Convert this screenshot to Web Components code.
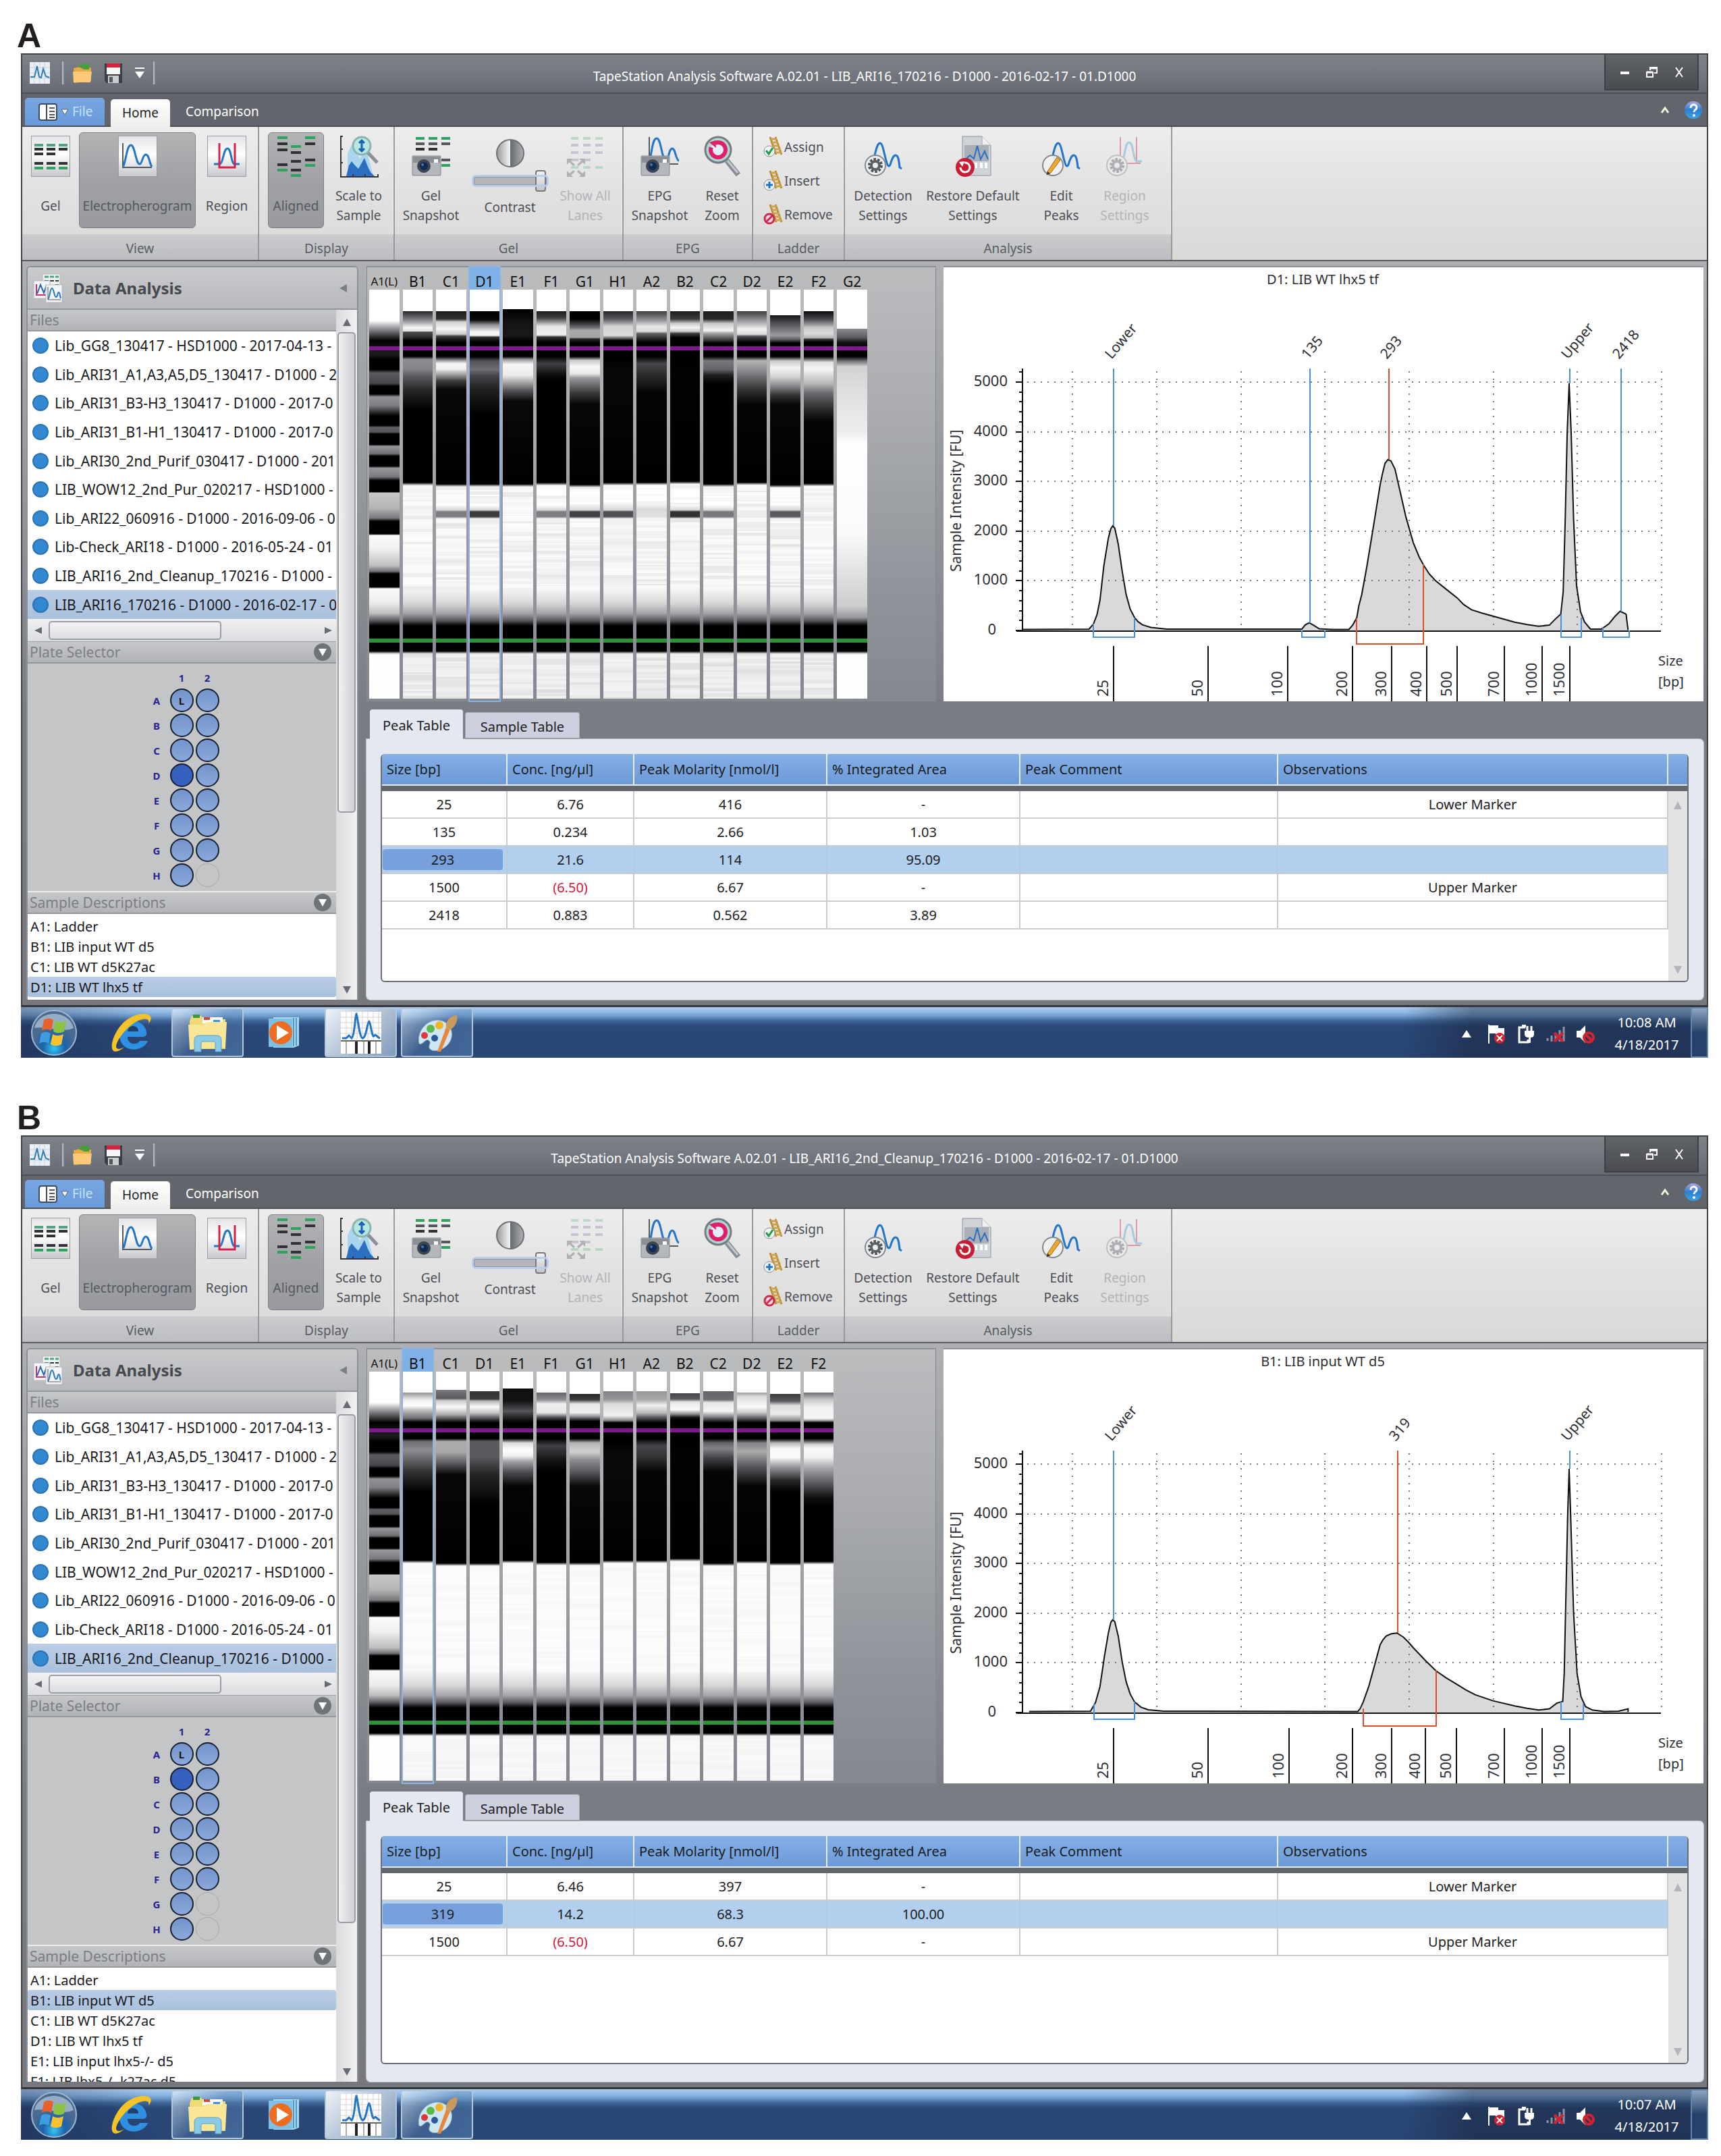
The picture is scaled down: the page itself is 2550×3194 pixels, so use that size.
<!DOCTYPE html>
<html lang="en">
<head>
<meta charset="utf-8">
<title>TapeStation Analysis Software</title>
<style>
  body { margin: 0; background: #fff; font-family: "Noto Sans", "Open Sans", sans-serif; }
  main { display: flex; flex-direction: column; gap: 36px; padding: 0 19px 24px 31px; }
</style>
</head>
<body>
<main>
  <figure-panel letter="A"><tape-window run="a"></tape-window></figure-panel>
  <figure-panel letter="B"><tape-window run="b"></tape-window></figure-panel>
</main>
<script>
/* ---------- data ---------- */
const FILES = [
  'Lib_GG8_130417 - HSD1000 - 2017-04-13 -',
  'Lib_ARI31_A1,A3,A5,D5_130417 - D1000 - 2',
  'Lib_ARI31_B3-H3_130417 - D1000 - 2017-0',
  'Lib_ARI31_B1-H1_130417 - D1000 - 2017-0',
  'Lib_ARI30_2nd_Purif_030417 - D1000 - 2017',
  'LIB_WOW12_2nd_Pur_020217 - HSD1000 -',
  'Lib_ARI22_060916 - D1000 - 2016-09-06 - 0',
  'Lib-Check_ARI18 - D1000 - 2016-05-24 - 01',
  'LIB_ARI16_2nd_Cleanup_170216 - D1000 - 2',
  'LIB_ARI16_170216 - D1000 - 2016-02-17 - 0'
];
const LADDER = [[210,255],[240,140],[280,0],[318,28],[330,25],[345,0],[380,0],[392,90],[428,70],[438,0],[465,0],[475,145],[505,125],[535,20],[542,0],[575,0],[580,95],[597,85],[603,0],[640,0],[646,150],[672,110],[680,0],[715,0],[722,150],[752,120],[765,0],[804,0],[808,200],[860,180],[895,120],[906,0],[950,0],[955,250],[1000,242],[1060,190],[1080,110],[1088,0],[1134,0],[1140,250],[1190,235],[1225,190],[1250,90],[1268,0]];
const lane = (name, top, low, end, band) => ({ name, top, low, end, band });
const RUNS = {
  a: {
    title: 'TapeStation Analysis Software A.02.01 - LIB_ARI16_170216 - D1000 - 2016-02-17 - 01.D1000',
    files: FILES, filesHeight: 426, thumb: 712, time: '10:08 AM', selectedWell: 'D1', emptyWells: ['H2'],
    samples: ['A1: Ladder', 'B1: LIB input WT d5', 'C1: LIB WT d5K27ac', 'D1: LIB WT lhx5 tf'], selectedSample: 3,
    gelWidth: 738, selectedLane: 3, noise: 20,
    lanes: [
      lane('A1(L)'),
      lane('B1', [[178,40],[205,120],[235,245],[247,225],[250,75],[268,45],[280,0]], [[345,140],[380,130],[400,95],[450,40],[520,0]], 772),
      lane('C1', [[178,30],[205,50],[215,210],[240,245],[258,200],[265,60],[285,0]], [[348,150],[360,245],[378,240],[395,170],[420,60],[450,8]], 777, 125),
      lane('D1', [[178,0],[208,8],[225,140],[250,245],[262,240],[268,50],[285,0]], [[350,80],[380,110],[400,70],[450,32],[540,0]], 777, 60),
      lane('E1', [[172,0],[220,20],[262,25],[280,0]], [[345,150],[362,245],[400,235],[420,180],[455,80],[490,10]], 777),
      lane('F1', [[178,30],[200,60],[230,230],[260,240],[268,50],[285,0]], [[360,65],[400,12],[420,0]], 772, 125),
      lane('G1', [[178,0],[205,0],[235,110],[245,170],[268,165],[275,40],[288,0]], [[348,200],[370,248],[395,230],[410,150],[460,60],[500,8]], 779, 65),
      lane('H1', [[178,40],[205,90],[230,210],[262,220],[270,120],[280,0]], [[400,8]], 772, 80),
      lane('A2', [[178,60],[210,150],[230,230],[248,220],[255,100],[285,0]], [[360,70],[390,50],[460,5]], 771, 222),
      lane('B2', [[178,30],[205,60],[220,200],[235,245],[248,200],[255,60],[270,0]], [[400,2]], 768, 50),
      lane('C2', [[178,30],[205,40],[220,200],[245,245],[255,160],[280,50],[288,0]], [[350,120],[380,100],[400,30],[430,0]], 777, 120),
      lane('D2', [[178,60],[210,150],[240,240],[258,220],[265,80],[285,0]], [[350,180],[390,130],[450,50],[500,5]], 771),
      lane('E2', [[192,20],[215,70],[262,155],[275,100],[288,0]], [[350,200],[375,245],[405,210],[440,130],[470,50],[500,8]], 780, 90),
      lane('F2', [[178,10],[205,70],[235,200],[255,220],[270,180],[275,60],[285,0]], [[355,225],[380,245],[430,180],[460,110],[520,40],[560,5]], 775),
      lane('G2', [[238,140],[270,90],[285,20],[295,10]], null)
    ],
    sampleTitle: 'D1: LIB WT lhx5 tf',
    ticks: [[25,354],[50,545],[100,707],[200,837],[300,917],[400,987],[500,1049],[700,1144],[1000,1221],[1500,1276]],
    trace: [[170,1281],[305,1280],[314,1262],[321,1230],[327,1180],[335,1060],[344,965],[349,932],[353,922],[357,930],[364,985],[372,1080],[380,1160],[388,1210],[397,1240],[404,1254],[413,1265],[430,1274],[462,1280],[735,1280],[742,1265],[750,1258],[760,1268],[770,1279],[795,1281],[830,1281],[838,1265],[846,1240],[850,1200],[856,1160],[866,1065],[880,920],[893,780],[898,740],[903,705],[909,692],[915,697],[923,725],[935,815],[945,890],[960,980],[972,1030],[981,1058],[992,1088],[1005,1112],[1027,1142],[1049,1172],[1062,1195],[1078,1213],[1100,1225],[1121,1235],[1165,1256],[1190,1264],[1213,1270],[1235,1266],[1247,1245],[1258,1228],[1263,1150],[1267,900],[1271,600],[1275,428],[1279,600],[1284,900],[1290,1130],[1298,1220],[1306,1255],[1318,1280],[1340,1280],[1355,1262],[1368,1235],[1378,1218],[1390,1228],[1394,1283]],
    marks: [['Lower',354,922,314,1262,397,1240,'b'],['135',751,1258,735,1284,782,1284,'b'],['293',911,692,846,1242,981,1055,'r'],['Upper',1276,428,1258,1228,1300,1240,'b'],['2418',1380,1218,1343,1275,1396,1284,'b']],
    rows: [['25','6.76','416','-','','Lower Marker'],['135','0.234','2.66','1.03','',''],['293','21.6','114','95.09','',''],['1500','(6.50)','6.67','-','','Upper Marker'],['2418','0.883','0.562','3.89','','']],
    selectedRow: 2
  },
  b: {
    title: 'TapeStation Analysis Software A.02.01 - LIB_ARI16_2nd_Cleanup_170216 - D1000 - 2016-02-17 - 01.D1000',
    files: FILES.slice(0, 9), filesHeight: 384, thumb: 754, time: '10:07 AM', selectedWell: 'B1', emptyWells: ['G2', 'H2'],
    samples: ['A1: Ladder', 'B1: LIB input WT d5', 'C1: LIB WT d5K27ac', 'D1: LIB WT lhx5 tf', 'E1: LIB input lhx5-/- d5', 'F1: LIB lhx5-/- k27ac d5'], selectedSample: 1,
    gelWidth: 688, selectedLane: 1, noise: 6,
    lanes: [
      lane('A1(L)'),
      lane('B1', [[176,150],[200,235],[220,255],[240,180],[265,110],[278,0]], [[345,110],[375,140],[400,110],[450,50],[520,0]], 757),
      lane('C1', [[166,120],[196,90],[203,200],[225,250],[250,180],[270,60],[280,0]], [[345,170],[380,170],[420,90],[460,8]], 767),
      lane('D1', [[170,50],[198,60],[205,180],[225,250],[245,200],[265,80],[280,0]], [[345,90],[400,88],[460,36],[520,18],[560,0]], 767),
      lane('E1', [[162,15],[205,20],[240,85],[260,40],[280,0]], [[350,220],[375,255],[395,240],[415,160],[450,80],[500,5]], 757),
      lane('F1', [[176,100],[200,140],[215,240],[245,230],[262,80],[275,0]], [[360,65],[410,20],[450,0]], 764),
      lane('G1', [[180,40],[200,60],[215,230],[245,240],[258,150],[275,0]], [[350,180],[380,210],[410,140],[450,90],[500,8]], 765),
      lane('H1', [[172,130],[200,150],[215,220],[255,240],[272,140],[280,0]], [[400,10]], 757),
      lane('A2', [[172,150],[200,170],[220,240],[245,190],[262,90],[280,0]], [[360,70],[400,50],[450,5]], 757),
      lane('B2', [[178,70],[198,90],[208,230],[235,250],[250,140],[262,20],[270,0]], [[400,2]], 751),
      lane('C2', [[172,100],[200,110],[210,230],[240,245],[260,130],[280,0]], [[350,100],[370,130],[400,70],[450,5]], 767),
      lane('D2', [[176,160],[190,220],[225,250],[245,200],[265,90],[280,0]], [[350,130],[380,170],[430,90],[500,5]], 759),
      lane('E2', [[180,60],[205,90],[220,220],[250,235],[272,140],[280,0]], [[350,180],[370,250],[400,250],[430,160],[480,40],[520,0]], 766),
      lane('F2', [[176,110],[200,200],[225,240],[265,245],[272,170],[280,0]], [[355,210],[370,250],[400,240],[440,160],[490,90],[540,15],[570,0]], 761)
    ],
    sampleTitle: 'B1: LIB input WT d5',
    ticks: [[25,354],[50,545],[100,709],[200,837],[300,917],[400,984],[500,1047],[700,1144],[1000,1221],[1500,1276]],
    trace: [[184,1281],[308,1280],[318,1250],[327,1195],[336,1090],[344,1010],[349,972],[353,963],[357,970],[364,1020],[372,1110],[380,1178],[388,1220],[397,1248],[410,1266],[425,1275],[456,1280],[820,1281],[848,1281],[853,1270],[859,1248],[870,1195],[882,1120],[893,1050],[899,1032],[905,1020],[915,1012],[927,1009],[940,1023],[950,1040],[960,1060],[985,1105],[1006,1140],[1027,1165],[1049,1188],[1066,1206],[1085,1223],[1121,1244],[1165,1262],[1190,1270],[1213,1276],[1235,1272],[1250,1252],[1262,1246],[1265,1150],[1269,840],[1272,600],[1275,440],[1278,600],[1284,940],[1291,1150],[1299,1230],[1308,1264],[1322,1276],[1345,1281],[1375,1280],[1394,1272],[1394,1283]],
    marks: [['Lower',354,963,315,1255,397,1248,'b'],['319',929,1009,859,1270,1006,1138,'r'],['Upper',1276,440,1258,1247,1304,1255,'b']],
    rows: [['25','6.46','397','-','','Lower Marker'],['319','14.2','68.3','100.00','',''],['1500','(6.50)','6.67','-','','Upper Marker']],
    selectedRow: 1
  }
};

/* ---------- icons ---------- */
const svg = (w, h, body) => `<svg width="${w}" height="${h}" viewBox="0 0 ${w} ${h}" aria-hidden="true">${body}</svg>`;
const dash = (x, y, c, w = 13) => `<rect x="${x}" y="${y}" width="${w}" height="4" fill="${c}"/>`;
const tile = id => `<defs><linearGradient id="${id}" x2="0" y2="1"><stop stop-color="#e2e3e6"/><stop offset=".45" stop-color="#fff"/><stop offset="1" stop-color="#c6c8cc"/></linearGradient></defs><rect x=".5" y=".5" width="57" height="60" fill="url(#${id})" stroke="#9a9da2"/>`;
const camera = (y) => `<rect x="1" y="${y}" width="42" height="29" rx="1" fill="#b4b8bd" stroke="#85898f"/><rect x="2" y="${y + 1}" width="40" height="9" fill="#8b9097"/><rect x="33" y="${y + 5}" width="6" height="5" fill="#fff"/><circle cx="18" cy="${y + 15}" r="10" fill="#3f454e"/><circle cx="18" cy="${y + 15}" r="6" fill="#0c2c58"/><circle cx="16" cy="${y + 13}" r="2" fill="#4d74a5"/>`;
const gear = (cx, cy) => `<circle cx="${cx}" cy="${cy}" r="15" fill="#eceef0" stroke="#84888e" stroke-width="2"/><circle cx="${cx}" cy="${cy}" r="9" fill="none" stroke="#4c5157" stroke-width="4" stroke-dasharray="3.5 2.15"/><circle cx="${cx}" cy="${cy}" r="6" fill="none" stroke="#5c6167" stroke-width="4"/>`;
const wave = '<path d="M17 22C19 14 21 4 25 4C29 4 31 20 34 30C36 38 38 40 40 36C42 30 44 22 48 22C52 22 53 30 54 40L57 42" transform="translate(-1 7)" fill="none" stroke="#2276c9" stroke-width="3"/>';
const G = '#2ea35b', K = '#303236';
const ladder = '<path d="M11 1l9 26M19 1l9 26" stroke="#b98a30" stroke-width="3" fill="none"/><path d="M12 4h9M14 9h9M15 14h10M17 19h10M19 24h9" stroke="#cfa34a" stroke-width="3"/>';
const ICON = {
  gel: svg(58, 62, tile('t1') + [5, 23, 41].map(x => dash(x, 12, '#4fa583') + dash(x, 18, K) + dash(x, 39, K) + dash(x, 46, G)).join('') + dash(5, 25, K) + dash(23, 25, K)),
  epg: svg(58, 62, tile('t2') + '<path d="M7 11v36h43" fill="none" stroke="#555a61" stroke-width="2"/><path d="M8 45C12 35 13 14 19 14C25 14 26 42 32 42C36 42 36 28 41 28C46 28 46 40 50 46" fill="none" stroke="#2276c9" stroke-width="3"/>'),
  region: svg(58, 62, tile('t3') + '<path d="M10 42h9C24 40 24 19 30 19C36 19 35 40 40 42h8" fill="none" stroke="#2276c9" stroke-width="3"/><path d="M18 11v36h23V11" fill="none" stroke="#d42345" stroke-width="3"/>'),
  aligned: svg(58, 62, dash(1, 1, G, 15) + dash(42, 1, G, 15) + dash(1, 10, K, 15) + dash(42, 10, K, 15) + dash(21, 14, G, 15) + dash(1, 19, K, 15) + dash(21, 23, K, 15) + dash(42, 34, K, 15) + dash(21, 36, K, 15) + dash(1, 41, K, 15) + dash(42, 42, G, 15) + dash(1, 49, G, 15) + dash(21, 49, K, 15) + dash(21, 57, G, 15)),
  scale: svg(58, 62, '<path d="M12 60V26L20 10L30 34L40 20L50 60Z" fill="#a9d6ee"/><path d="M10 60L14 44L18 38L23 44L28 49L32 42L37 33L42 46L46 54L52 60Z" fill="#2a6fc0"/><path d="M5 1H2V61H57V57M2 20h3M2 40h3M20 61v-4M38 61v-4" fill="none" stroke="#333840" stroke-width="2"/><path d="M42 25L56 40" stroke="#8a9198" stroke-width="5"/><circle cx="33" cy="15" r="13" fill="#b7e8de" stroke="#8db3ae" stroke-width="3"/><path d="M33 7v16M29 11l4-4 4 4M29 19l4 4 4-4" fill="none" stroke="#1c5fb8" stroke-width="3"/>'),
  gelsnap: svg(58, 62, [6, 25, 44].map(x => dash(x, 2, G) + dash(x, 10, '#55595f')).join('') + dash(6, 18, K) + dash(25, 18, K) + dash(44, 34, '#55595f') + dash(44, 42, G) + camera(30)),
  lanes: svg(58, 62, '<g opacity=".4">' + [8, 26, 44].map(x => dash(x, 2, '#6dc68f', 11) + dash(x, 12, '#8e93b4', 11) + dash(x, 23, '#8e93b4', 11)).join('') + dash(8, 34, '#8e93b4', 11) + dash(26, 34, '#8e93b4', 11) + dash(8, 45, '#6dc68f', 11) + dash(26, 45, '#6dc68f', 11) + dash(44, 45, '#6dc68f', 11) + '<path d="M5 37l8 7M26 37l-8 7M5 59l8-7M26 59l-8-7" stroke="#62656b" stroke-width="3"/><path d="M2 34h9l-9 9zM29 34h-9l9 9zM2 61h9l-9-9zM29 61h-9l9-9z" fill="#62656b"/></g>'),
  epgsnap: svg(58, 62, '<path d="M13 2v40h43" fill="none" stroke="#555a61" stroke-width="2"/><path d="M14 36C17 22 18 4 24 4C31 4 31 36 38 36C42 36 42 19 47 19C52 19 52 36 57 37" fill="none" stroke="#2276c9" stroke-width="3"/>' + camera(30)),
  zoom: svg(58, 62, '<path d="M36 37L53 58" stroke="#878d94" stroke-width="8"/><path d="M37 37L52 55" stroke="#c6cace" stroke-width="3"/><circle cx="23" cy="21" r="19" fill="#a9d9cf" stroke="#747b82" stroke-width="3"/><circle cx="23" cy="21" r="11" fill="#e5eef8" stroke="#e31c6c" stroke-width="6" stroke-dasharray="60 9" transform="rotate(-115 23 21)"/><path d="M10 10l9-3 1 11z" fill="#e31c6c"/>'),
  detect: svg(58, 62, wave + gear(17, 44)),
  restore: svg(58, 62, '<path d="M13 1H42L55 14V59H13Z" fill="#cfd3d7" stroke="#8f949a"/><path d="M42 1V14H55" fill="#eef0f1" stroke="#a3a8ad"/><rect x="16" y="14" width="36" height="24" fill="#aab0b7"/><path d="M18 35l6-6 6 5 5-19 5 20 6-12 5 12" fill="none" stroke="#2a6fc0" stroke-width="2"/><path d="M33 40v8M41 40v8M48 40v8" stroke="#fff" stroke-width="4"/><circle cx="17" cy="47" r="14" fill="#c71e35"/><circle cx="17" cy="47" r="7" fill="none" stroke="#fff" stroke-width="3" stroke-dasharray="34 10" transform="rotate(-100 17 47)"/><path d="M8 39l8-1-3 8z" fill="#fff"/>'),
  edit: svg(58, 62, wave + '<circle cx="16" cy="44" r="15" fill="#eef0f1" stroke="#84888e" stroke-width="2"/><path d="M8 53L22 32L27 36L13 55L7 58Z" fill="#eda82d" stroke="#9a6c18"/><path d="M7 58l1-5 4 3z" fill="#333"/>'),
  regset: svg(58, 62, '<g opacity=".4"><path d="M22 2v39h30M46 2v39" fill="none" stroke="#d42345" stroke-width="2"/><path d="M20 40h4C29 36 28 10 35 10C42 10 40 34 46 38h8" fill="none" stroke="#4b9fd0" stroke-width="3"/>' + gear(17, 44) + '</g>'),
  contrast: svg(44, 46, '<defs><linearGradient id="c1"><stop stop-color="#999"/><stop offset=".5" stop-color="#f5f5f5"/><stop offset=".51" stop-color="#66696e"/><stop offset="1" stop-color="#b0b2b5"/></linearGradient></defs><circle cx="22" cy="23" r="20" fill="url(#c1)" stroke="#6c7076" stroke-width="2"/>'),
  assign: svg(30, 32, ladder + '<circle cx="10" cy="22" r="8" fill="#f2f4f5" stroke="#8a8e93"/><path d="M5 21l4 5 6-9" fill="none" stroke="#1f9d47" stroke-width="3"/>'),
  insert: svg(30, 32, ladder + '<circle cx="10" cy="22" r="8" fill="#eef3f8" stroke="#8a8e93"/><path d="M10 17v10M5 22h10" stroke="#1f72c4" stroke-width="3"/>'),
  remove: svg(30, 32, ladder + '<circle cx="10" cy="22" r="7" fill="#f7d7de" stroke="#cc2a4e" stroke-width="3"/><path d="M5 27l10-10" stroke="#cc2a4e" stroke-width="3"/>')
};

/* ---------- base class ---------- */
class Part extends HTMLElement {
  connectedCallback() {
    if (this.shadowRoot) return;
    this.attachShadow({ mode: 'open' }).innerHTML =
      `<style>*{box-sizing:border-box}:host{display:block;box-sizing:border-box}button{font:inherit;color:inherit;background:none;border:0;padding:0;margin:0}svg{display:block}${this.css()}</style>${this.html()}`;
  }
  get run() { return RUNS[this.getAttribute('run')]; }
}

customElements.define('figure-panel', class extends Part {
  css() { return `h2{margin:0 0 1px -6px;padding-top:28px;font:bold 50px/50px "Liberation Sans",sans-serif;color:#231f20}`; }
  html() { return `<h2>${this.getAttribute('letter')}</h2><slot></slot>`; }
});

customElements.define('tape-window', class extends Part {
  css() { return `
    .app{border:2px solid #414347;border-bottom:3px solid #33363c;}
    .body{display:grid;grid-template-columns:492px minmax(0,1fr);gap:12px;padding:7px 5px 8px 6px;background:linear-gradient(#aeb0b3,#989b9f 25%,#82858b 52%,#797c82 60%,#76787d)}
    .right{display:flex;flex-direction:column;gap:12px;min-width:0}
    .views{display:grid;grid-template-columns:844px minmax(0,1fr);gap:11px}
    side-bar{height:0;min-height:100%}`; }
  html() { const r = this.getAttribute('run'); return `
    <div class="app"><title-bar run="${r}"></title-bar><ribbon-bar></ribbon-bar>
      <div class="body"><side-bar run="${r}"></side-bar>
        <div class="right"><div class="views"><gel-view run="${r}"></gel-view><epg-chart run="${r}"></epg-chart></div><peak-table run="${r}"></peak-table></div>
      </div></div>
    <task-bar run="${r}"></task-bar>`; }
});

customElements.define('title-bar', class extends Part {
  css() { return `
    :host{display:grid;grid-template-columns:1fr auto 1fr;height:58px;background:linear-gradient(#7f8287,#747880 45%,#676a71);border-bottom:2px solid #4d5056;color:#fff}
    .quick{display:flex;align-items:center;padding-left:11px;gap:18px;padding-bottom:2px}
    .sep{width:3px;height:34px;background:linear-gradient(90deg,#c8cacd,#84878c)}
    .tight{gap:12px;display:flex;align-items:center}
    h1{margin:0;font-size:19px;line-height:64px;font-weight:400;white-space:nowrap;height:56px}
    .ctl{justify-self:end;display:flex;align-items:center;gap:16px;padding:0 15px 0 17px;width:140px;height:53px;margin-right:12px;background:linear-gradient(#606368,#4a4c51);border:2px solid #3e4044;border-top:0}
    .ctl button{width:24px;height:24px;flex:none}`; }
  html() { return `
    <div class="quick">
      ${svg(30, 32, '<rect width="30" height="32" fill="#e9f0f5"/><path d="M0 8h30M0 16h30M0 24h30M7 0v32M15 0v32M22 0v32" stroke="#cbd3da"/><path d="M1 22h6l4-16 3 16 3 1 3-13 4 11 5 2" fill="none" stroke="#2d7fb8" stroke-width="2"/>')}
      <div class="tight"><span class="sep"></span>
      <button aria-label="Open">${svg(30, 32, '<path d="M2 9l10-2 3 3 13-2v20L3 31Z" fill="#e9a947"/><path d="M1 14h28l-2 16H2z" fill="#fbc977"/><path d="M10 7c2-5 8-6 11-3l4-2v9h-9l3-3c-3-2-5-1-6 1z" fill="#3fa52f"/>')}</button></div>
      <button aria-label="Save">${svg(26, 32, '<path d="M0 2h26v29H3l-3-4z" fill="#3c3e43"/><rect x="3" y="2" width="20" height="16" fill="#f5f5f5"/><rect x="3" y="2" width="20" height="6" fill="#d8223c"/><rect x="5" y="20" width="16" height="11" fill="#c9ccd0"/><rect x="7" y="22" width="5" height="8" fill="#55585e"/>')}</button>
      <div class="tight"><button aria-label="Customize">${svg(16, 18, '<path d="M1 2h14" stroke="#fff" stroke-width="2"/><path d="M1 7h14l-7 10z" fill="#fff"/>')}</button>
      <span class="sep"></span></div>
    </div>
    <h1>${this.run.title}</h1>
    <div class="ctl">
      <button aria-label="Minimize">${svg(24, 24, '<rect x="5" y="11" width="13" height="4" fill="#fff"/>')}</button>
      <button aria-label="Restore">${svg(24, 24, '<path d="M9 9V5h10v8h-4" fill="none" stroke="#fff" stroke-width="2"/><path d="M9 6h10" stroke="#fff" stroke-width="3"/><path d="M4 12h9v7H4z" fill="none" stroke="#fff" stroke-width="2"/><path d="M4 12h9" stroke="#fff" stroke-width="3"/>')}</button>
      <button aria-label="Close">${svg(24, 24, '<path d="M7 5l10 14M17 5L7 19" stroke="#fff" stroke-width="2"/>')}</button>
    </div>`; }
});

customElements.define('ribbon-button', class extends Part {
  css() { return `
    button{width:100%;height:142px;display:flex;flex-direction:column;align-items:center;gap:13px;padding-top:4px;border-radius:6px;border:1px solid transparent;color:#4c4f56;font-size:19px;line-height:29px}
    :host([on]) button{background:linear-gradient(#b2b4b5,#9fa1a5 50%,#989a9f);border-color:#7c7f85;color:#55585f}
    :host([dim]) button{color:#b2b4b8}
    span{height:58px;display:flex;align-items:center;text-align:center;white-space:pre}`; }
  html() { return `<button${this.hasAttribute('dim') ? ' disabled' : ''}>${ICON[this.getAttribute('icon')]}<span><slot></slot></span></button>`; }
});

customElements.define('ribbon-group', class extends Part {
  css() { return `
    :host{display:flex;flex-direction:column;border-right:2px solid #96999f;box-shadow:inset -1px 0 #f2f2f2}
    .items{display:flex;height:159px;padding-top:8px}
    h3{margin:0;height:38px;line-height:42px;text-align:center;font-weight:400;font-size:19px;color:#595c63;background:linear-gradient(#cbccce,#bcbdc0)}`; }
  html() { return `<div class="items"><slot></slot></div><h3>${this.getAttribute('label')}</h3>`; }
});

customElements.define('contrast-slider', class extends Part {
  css() { return `
    :host{display:flex;flex-direction:column;align-items:center;padding:8px 0 0 3px;color:#4c4f56;font-size:19px;line-height:29px}
    input{appearance:none;-webkit-appearance:none;width:110px;height:32px;margin:2px 0 9px;background:none}
    input::-webkit-slider-runnable-track{height:14px;border:2px solid #8f959d;outline:3px solid #b9cdec;outline-offset:-1px;border-radius:4px;background:#b4b6b9}
    input::-webkit-slider-thumb{-webkit-appearance:none;width:16px;height:32px;margin-top:-11px;border:2px solid #767a80;border-radius:4px;background:linear-gradient(#f2f2f2,#c4c6c9)}
    label{display:block}`; }
  html() { return `${ICON.contrast}<input id="c" type="range" value="100"><label for="c">Contrast</label>`; }
});

customElements.define('ladder-menu', class extends Part {
  css() { return `
    :host{display:flex;flex-direction:column;gap:18px;padding:6px 0 0 14px}
    button{display:flex;align-items:center;gap:2px;height:32px;font-size:19px;color:#4c4f56}`; }
  html() { return ['Assign', 'Insert', 'Remove'].map(t => `<button>${ICON[t.toLowerCase()]}${t}</button>`).join(''); }
});

customElements.define('ribbon-bar', class extends Part {
  css() { return `
    nav{display:flex;align-items:flex-end;height:49px;background:#62656c;border-bottom:2px solid #4c4e53;font-size:19px;padding:0 6px 0 4px;color:#fff}
    nav button,nav a{height:41px;line-height:43px;display:flex;align-items:center;color:inherit;text-decoration:none}
    .file{width:118px;padding-left:20px;gap:5px;background:linear-gradient(#78a6e2,#6a9adb);border-radius:5px 5px 0 0;color:#c9e2ff}
    .home{width:88px;justify-content:center;background:linear-gradient(#fff,#eee);color:#1d1f22;margin:0 23px -2px 9px;border-radius:5px 5px 0 0}
    .end{margin-left:auto;display:flex;gap:22px;align-items:center;height:47px}
    .end button{height:auto}
    .groups{display:flex;height:199px;background:linear-gradient(#ededed,#e1e1e2 50%,#d9d9d7);border-bottom:2px solid #5a5c61}`; }
  html() {
    const b = (icon, w, label, extra = '') => `<ribbon-button icon="${icon}" style="flex:0 0 ${w}px" ${extra}>${label}</ribbon-button>`;
    return `
    <nav>
      <button class="file">${svg(28, 26, '<rect x="1" y="1" width="26" height="24" rx="3" fill="#fff" stroke="#3f4c60" stroke-width="2"/><path d="M12 2v22" stroke="#3f4c60" stroke-width="2"/><path d="M16 7h8M16 12h8M16 17h8M16 21h8" stroke="#555" stroke-width="2"/>')}${svg(12, 12, '<path d="M1 2h10l-5 8z" fill="#fff" stroke="#54617a"/>')}File</button>
      <a class="home" href="#home">Home</a><a href="#comparison">Comparison</a>
      <div class="end"><button aria-label="Collapse ribbon">${svg(14, 14, '<path d="M2 11l5-7 5 7" fill="none" stroke="#f2f5d8" stroke-width="3"/>')}</button>
      <button aria-label="Help">${svg(27, 28, '<defs><linearGradient id="h" x2="0" y2="1"><stop stop-color="#a9a8e0"/><stop offset=".5" stop-color="#2c7fd0"/><stop offset="1" stop-color="#39a5e6"/></linearGradient></defs><circle cx="13" cy="14" r="13" fill="url(#h)"/><path d="M9 11c0-7 9-6 9-1 0 4-4 3-4 7" fill="none" stroke="#fff" stroke-width="3"/><circle cx="14" cy="22" r="2" fill="#fff"/>')}</button></div>
    </nav>
    <div class="groups">
      <ribbon-group label="View" style="width:351px">${b('gel', 84, 'Gel')}${b('epg', 173, 'Electropherogram', 'on')}${b('region', 92, 'Region')}</ribbon-group>
      <ribbon-group label="Display" style="width:201px">${b('gel', 0, '', 'hidden')}${b('aligned', 83, 'Aligned', 'on class="first"')}${b('scale', 103, 'Scale to\nSample')}</ribbon-group>
      <ribbon-group label="Gel" style="width:339px">${b('gelsnap', 107, 'Gel\nSnapshot')}<contrast-slider style="flex:0 0 124px"></contrast-slider>${b('lanes', 102, 'Show All\nLanes', 'dim')}</ribbon-group>
      <ribbon-group label="EPG" style="width:192px">${b('epgsnap', 107, 'EPG\nSnapshot')}${b('zoom', 78, 'Reset\nZoom')}</ribbon-group>
      <ribbon-group label="Ladder" style="width:136px"><ladder-menu></ladder-menu></ribbon-group>
      <ribbon-group label="Analysis" style="width:485px">${b('detect', 113, 'Detection\nSettings')}${b('restore', 153, 'Restore Default\nSettings')}${b('edit', 109, 'Edit\nPeaks')}${b('regset', 79, 'Region\nSettings', 'dim')}</ribbon-group>
    </div>`.replace(b('gel', 0, '', 'hidden'), '<span style="width:14px"></span>');
  }
});

customElements.define('plate-selector', class extends Part {
  css() { return `
    :host{height:339px;background:#c4c5c7;border-bottom:2px solid #eceded;padding-top:5px}
    .grid{display:grid;grid-template-columns:36px 38px 38px;grid-template-rows:31px repeat(8,37px);width:112px;margin-left:173px;justify-items:center;align-items:center;font-size:15px;font-weight:700;color:#2a2390}
    .grid button{width:35px;height:35px;border-radius:50%;border:2px solid #16202e;background:linear-gradient(#7394cb,#8aa9dc);color:#111}
    .grid .sel{background:#3560bd}
    .grid .none{border-color:#a6a8ab;border-width:1px;background:none}`; }
  html() {
    const r = this.run;
    return `<div class="grid"><span></span><span>1</span><span>2</span>${[...'ABCDEFGH'].map(l => `<span>${l}</span>` + ['1', '2'].map(c => {
      const w = l + c;
      return `<button aria-label="Well ${w}" class="${w === r.selectedWell ? 'sel' : r.emptyWells.includes(w) ? 'none' : ''}">${w === 'A1' ? 'L' : ''}</button>`;
    }).join('')).join('')}</div>`;
  }
});

customElements.define('side-bar', class extends Part {
  css() { return `
    :host{display:flex;flex-direction:column;overflow:hidden;border:2px solid #8c8f95;border-bottom:0;border-radius:6px 6px 0 0;background:#c4c5c7}
    header{flex:none;display:flex;align-items:center;height:63px;padding:0 14px 0 8px;gap:15px;background:linear-gradient(#c9cacc,#b7b8bb);border-bottom:2px solid #94979c}
    h2{margin:0;flex:1;font-size:24px;line-height:30px;font-weight:700;color:#46494f}
    .cols{flex:1;min-height:0;display:grid;grid-template-columns:minmax(0,1fr) 31px}
    .left{display:flex;flex-direction:column;min-height:0;overflow:hidden}
    h3{flex:none;margin:0;height:32px;display:flex;justify-content:space-between;align-items:center;padding:0 6px 0 3px;font-weight:400;font-size:21px;line-height:28px;color:#7b7e84;background:linear-gradient(#c6c7c9,#b2b3b6);border-bottom:2px solid #94979c}
    ul{margin:0;padding:0;list-style:none;background:#fff;color:#17181b}
    .files{flex:none;display:grid;grid-auto-rows:1fr}
    .files button{width:100%;height:100%;display:flex;align-items:center;gap:9px;padding-left:7px;font-size:21px;white-space:nowrap;overflow:hidden;text-align:left}
    .files i{flex:none;width:24px;height:24px;border-radius:50%;background:#3389cf;border:2px solid #2a72b4}
    .on{background:linear-gradient(#bacce6,#a9c1dc)}
    .hbar{flex:none;height:34px;display:flex;align-items:center;gap:10px;padding:0 6px 0 9px;background:linear-gradient(#f1f1f2,#dcdde0);border-bottom:1px solid #9da0a5}
    .hbar span{width:256px;height:28px;border:2px solid #9a9da3;border-radius:5px;background:linear-gradient(#f3f3f4,#dcdde0)}
    .hbar svg:last-child{margin-left:auto}
    .samples{flex:1;min-height:0;padding-top:3px;overflow:hidden}
    .samples button{width:100%;height:30px;line-height:32px;display:block;text-align:left;padding-left:4px;font-size:20px;border-radius:3px;white-space:nowrap}
    .vbar{display:flex;flex-direction:column;align-items:center;padding:12px 0 8px;background:linear-gradient(90deg,#dadbdd,#f2f2f3)}
    .vbar span{width:27px;margin:9px 0 auto;border:2px solid #9a9da3;border-radius:5px;background:linear-gradient(90deg,#f1f1f2,#cfd0d3)}`; }
  html() {
    const r = this.run;
    const tri = (d, w = 12, h = 12) => svg(w, h, `<path d="${d}" fill="#666b76"/>`);
    const drop = `<button aria-label="Collapse">${svg(28, 28, '<circle cx="14" cy="14" r="13" fill="#6f7278"/><path d="M8 9h12l-6 11z" fill="#fff"/>')}</button>`;
    return `
    <header>${svg(44, 44, '<rect x="14" y="1" width="26" height="24" fill="#eef2f0" stroke="#b4b8bb"/><path d="M17 5h6M25 5h6M33 5h5" stroke="#4fa583" stroke-width="3"/><path d="M17 11h6M25 11h6M33 11h5M33 17h5" stroke="#333" stroke-width="2"/><rect x="1" y="11" width="24" height="26" fill="#f4f5f7" stroke="#b4b8bb"/><path d="M5 16v16h17" fill="none" stroke="#c8326e" stroke-width="2"/><path d="M6 30l5-13 5 12 4-12" fill="none" stroke="#2b62b8" stroke-width="2"/><rect x="19" y="17" width="24" height="26" fill="#f4f5f7" stroke="#b4b8bb"/><path d="M22 38c3-2 3-16 6-16s3 13 6 13 2-7 4-7 2 8 3 9" fill="none" stroke="#2276c9" stroke-width="2"/><path d="M22 20v19h19" fill="none" stroke="#555"/>')}<h2>Data Analysis</h2><button aria-label="Collapse panel">${svg(13, 14, '<path d="M12 1v12L1 7z" fill="#7c7f86"/>')}</button></header>
    <div class="cols"><div class="left">
      <h3>Files</h3>
      <ul class="files" style="height:${r.filesHeight}px">${r.files.map((f, i) => `<li class="${i === r.files.length - 1 ? 'on' : ''}"><button><i></i>${f}</button></li>`).join('')}</ul>
      <div class="hbar">${tri('M12 1v10L1 6z')}<span></span>${tri('M1 1v10l11-5z')}</div>
      <h3>Plate Selector${drop}</h3>
      <plate-selector run="${this.getAttribute('run')}" style="flex:none"></plate-selector>
      <h3>Sample Descriptions${drop}</h3>
      <ul class="samples">${r.samples.map((s, i) => `<li><button class="${i === r.selectedSample ? 'on' : ''}">${s}</button></li>`).join('')}</ul>
    </div>
    <div class="vbar">${tri('M6 1l6 11H0z')}<span style="height:${r.thumb}px"></span>${tri('M6 11L0 0h12z')}</div></div>`;
  }
});

customElements.define('gel-view', class extends Part {
  css() { return `
    :host{height:645px;border:1px solid #85888e;border-top:2px solid #8d9096;background:linear-gradient(#bbbcbe,#a9abae 35%,#90939a 75%,#858890)}
    .lanes{display:grid;grid-auto-flow:column;grid-auto-columns:1fr;column-gap:5px;margin-left:3px;height:642px}
    button{position:relative;display:grid;grid-template-rows:33px 606px;min-width:0;font-size:21px;line-height:42px;color:#111}
    .small{font-size:17px}
    button>span{white-space:nowrap;justify-self:center}
    .sel{background:linear-gradient(#7fb0e6 33px,transparent 33px);box-shadow:0 0 0 2px #8ab4e8;}`; }
  html() {
    const r = this.run;
    const px = y => ((y - 103) / 2.34).toFixed(1) + 'px';
    let seed = 7;
    const rnd = () => (seed = (seed * 16807) % 2147483647) / 2147483647;
    const g = v => { v = Math.round(v); return `rgb(${v},${v},${Math.min(255, v + (v > 60 && v < 170 ? 5 : 0))})`; };
    const at = (y, v) => `${g(v)} ${px(y)}`;
    const flat = (a, b, v) => `${g(v)} ${px(a)} ${px(b)}`;
    const streaks = (from, to, base) => {
      const out = [];
      for (let y = from; y < to;) {
        const n = Math.min(to, y + 3 + rnd() * 8), d = rnd();
        out.push(flat(y, n, base - d * d * r.noise));
        y = n;
      }
      return out;
    };
    const paint = l => {
      const s = [];
      if (l.name === 'A1(L)') { s.push(...LADDER.map(p => at(...p))); }
      else {
        s.push(flat(103, l.top[0][0], 255), ...l.top.map(p => at(...p)));
        s.push(at(335, 0));
        if (l.low) {
          s.push(...l.low.map(p => at(...p)), at(l.end, 0), at(l.end + 10, 250));
          if (l.band) s.push(...streaks(l.end + 10, 850, 255), at(867, 215), at(873, l.band), at(890, l.band), at(898, 250), ...streaks(900, 1140, 250));
          else s.push(...streaks(l.end + 10, 1140, 252));
          s.push(at(1150, 240), at(1190, 215), at(1225, 165), at(1250, 90), at(1268, 0));
        } else s.push(at(350, 110), at(370, 210), at(450, 222), at(600, 238), at(640, 255), at(950, 250), at(1100, 222), at(1200, 205), at(1240, 150), at(1268, 0));
      }
      s.push(at(1356, 0), at(1366, 235));
      s.push(...(l.name === 'A1(L)' || !l.low ? [at(1370, 253), at(1522, 253)] : streaks(1368, 1522, 252 - r.noise / 2)));
      return `background:linear-gradient(transparent 84px,#7c1a8c 84px 90px,transparent 90px 517px,#2f9137 517px 523px,transparent 523px),linear-gradient(${s.join(',')})`;
    };
    return `<div class="lanes" style="width:${r.gelWidth}px">${r.lanes.map((l, i) => `<button class="${i === r.selectedLane ? 'sel' : ''} ${i ? '' : 'small'}"><span>${l.name}</span><i style="${paint(l)}"></i></button>`).join('')}</div>`;
  }
});

customElements.define('epg-chart', class extends Part {
  css() { return `
    :host{height:645px;background:#fff;border-top:2px solid #8d9096}
    svg{width:100%;height:100%}
    text{font-family:"Noto Sans","Open Sans",sans-serif;fill:#2c2e33}`; }
  html() {
    const r = this.run;
    const X = u => Math.round((u - 11) / 1.3635), Y = v => Math.round((v - 21) / 2.34) - 2;
    const base = Y(1284), blue = '#4a90d9', red = '#dd4f28';
    const yv = k => Math.round(base - k * 73.6);
    let s = `<text x="562" y="25" font-size="20" text-anchor="middle">${r.sampleTitle}</text>`;
    const pts = r.trace.map(([u, v]) => `${((u - 11) / 1.3635).toFixed(1)},${((v - 21) / 2.34 - 2).toFixed(1)}`);
    s += `<polygon points="${X(r.trace[0][0])},${base} ${pts.join(' ')} ${X(1394)},${base}" fill="#d9d9da"/>`;
    for (let i = 1; i <= 5; i++) s += `<path d="M${X(180)} ${yv(i)}H1063" stroke="#77797d" stroke-width="2" stroke-dasharray="2 8"/>`;
    for (let i = 0; i < 8; i++) s += `<path d="M${X(272 + i * 170)} ${Y(385)}V${base}" stroke="#77797d" stroke-width="2" stroke-dasharray="2 9"/>`;
    s += `<polyline points="${pts.join(' ')}" fill="none" stroke="#111" stroke-width="2"/>`;
    s += `<path d="M${X(170)} ${Y(377)}V${base}M${X(158)} ${base + 1}H1063" stroke="#111" stroke-width="2" fill="none"/>`;
    for (let i = 0; i <= 26; i++) { const y = Math.round(base - i * 14.72); s += `<path d="M${X(i % 5 ? 164 : 157)} ${y}H${X(170)}" stroke="#111" stroke-width="2"/>`; }
    for (let i = 0; i <= 5; i++) s += i ? `<text x="95" y="${yv(i) + 6}" font-size="22" text-anchor="end">${i * 1000}</text>` : `<text x="78" y="${base + 6}" font-size="22" text-anchor="end">0</text>`;
    for (const [n, px, py, lx, ly, rx, ry, c] of r.marks) {
      const col = c === 'b' ? blue : red, bot = Y(c === 'b' ? 1308 : 1331);
      s += `<path d="M${X(px)} ${Y(377)}V${Y(py)}M${X(lx)} ${Y(ly)}V${bot}H${X(rx)}V${Y(ry)}" fill="none" stroke="${col}" stroke-width="2"/>`;
      s += `<text transform="translate(${X(px) - 3} ${Y(347)}) rotate(-50)" font-size="21">${n}</text>`;
    }
    for (const [n, u] of r.ticks) {
      s += `<path d="M${X(u)} ${Y(1338)}V643" stroke="#111" stroke-width="2"/>`;
      s += `<text transform="translate(${X(u) - 8} ${Y(1515)}) rotate(-90)" font-size="22">${n}</text>`;
    }
    s += `<text transform="translate(26 ${Y(1080)}) rotate(-90)" font-size="21">Sample Intensity [FU]</text>`;
    s += `<text x="1059" y="590" font-size="20">Size</text><text x="1059" y="621" font-size="20">[bp]</text>`;
    return `<svg viewBox="0 0 1126 643" preserveAspectRatio="none" role="img" aria-label="Electropherogram">${s}</svg>`;
  }
});

customElements.define('peak-table', class extends Part {
  css() { return `
    .tabs{display:flex;align-items:flex-end;gap:3px;padding-left:5px;height:44px;font-size:20px;color:#1b1c20}
    .tabs button{height:40px;width:170px;padding-top:3px;background:#cdcede;border:1px solid #a9abb5;border-bottom:2px solid #9c9ea6;border-radius:4px 4px 0 0}
    .tabs .on{height:44px;width:138px;background:#e4e8f0;border-color:#e4e8f0}
    .panel{height:386px;padding:22px 22px 26px 21px;background:#e4e8f0;border-radius:0 6px 6px 6px;box-shadow:0 0 0 1px #b9bcc4}
    .box{height:338px;display:grid;grid-template-rows:auto 1fr;overflow:hidden;border-radius:6px;border:2px solid #6b6e74;border-top:0;background:#fff}
    table{width:100%;border-collapse:separate;border-spacing:0;table-layout:fixed;font-size:20px;color:#1b1c20}
    th{height:43px;padding:0 0 0 7px;text-align:left;font-weight:400;line-height:45px;background:linear-gradient(#85afe6,#6c9ad8);border-right:2px solid #e6eefa}
    th:last-child{border:0}
    .strip td{height:10px;line-height:8px;padding:0;background:#62656b;border:0;border-top:2px solid #e8ecf4}
    td{height:41px;line-height:39px;padding:0;text-align:center;border-right:2px solid #cbccce;border-bottom:2px solid #cbccce}
    .sel td{background:#b3cfee;border-right-color:#b9c9dc}
    .sel td:first-child span{display:block;margin:0 5px 0 1px;height:31px;line-height:31px;border-radius:4px;background:#78a0dc}
    .bad{color:#d0193c}
    td.bar{background:#e3e3e4;border:0;vertical-align:top;padding-top:14px}
    .bar svg{margin:0 auto}
    .rest{display:flex;justify-content:flex-end}
    .rest span{width:28px;background:#e3e3e4;display:flex;justify-content:center;align-items:flex-end;padding-bottom:9px}`; }
  html() {
    const r = this.run, heads = ['Size [bp]', 'Conc. [ng/µl]', 'Peak Molarity [nmol/l]', '% Integrated Area', 'Peak Comment', 'Observations', ''];
    const w = [186, 188, 286, 286, 382, 578, 28];
    return `
    <div class="tabs" role="tablist"><button class="on" role="tab" aria-selected="true">Peak Table</button><button role="tab" aria-selected="false">Sample Table</button></div>
    <div class="panel"><div class="box"><table>
      <colgroup>${w.map((n, i) => `<col${i === 5 ? '' : ` style="width:${n}px"`}>`).join('')}</colgroup>
      <thead><tr>${heads.map(h => `<th>${h}</th>`).join('')}</tr></thead>
      <tbody><tr class="strip"><td colspan="7"></td></tr>${r.rows.map((row, i) => `<tr class="${i === r.selectedRow ? 'sel' : ''}">${row.map(c => `<td class="${c[0] === '(' ? 'bad' : ''}"><span>${c}</span></td>`).join('')}${i ? '' : `<td class="bar" rowspan="${r.rows.length}">${svg(12, 14, '<path d="M6 1l6 12H0z" fill="#b3b5bb"/>')}</td>`}</tr>`).join('')}</tbody>
    </table><div class="rest"><span>${svg(12, 14, '<path d="M6 13L0 1h12z" fill="#b3b5bb"/>')}</span></div></div></div>`;
  }
});

customElements.define('task-bar', class extends Part {
  css() { return `
    :host{display:flex;align-items:stretch;height:75px;background:linear-gradient(90deg,transparent 82%,rgba(24,32,54,.45) 86%),linear-gradient(90deg,rgba(20,30,60,.35),transparent 8%),linear-gradient(#a8c8ea 2px,#8db8e4 8px,#6c98c8 14px,#3f6798 20px,#2a4878 28px,#294573);color:#fff}
    button{display:flex;align-items:center;justify-content:center;flex:none}
    .box{width:107px;margin:1px 0;border:2px solid #b4c6da;border-radius:4px;background:linear-gradient(135deg,rgba(230,240,250,.65),rgba(90,130,180,.4) 50%,rgba(90,140,190,.5))}
    .lit{background:linear-gradient(135deg,#eef3f8,#b3c4d6 50%,#7e9abb)}
    .tray{margin-left:auto;display:flex;align-items:center;gap:14px;padding-top:4px}
    .tray svg:first-child{margin-right:8px}
    time{display:block;width:106px;text-align:center;font-size:20px;line-height:33px;margin:0 12px 0 23px;padding-top:6px}
    .desk{width:26px;border:2px solid #6286ae;background:linear-gradient(#8fa6c0,#27416a 50%)}`; }
  html() { return `
    <button aria-label="Start" style="width:97px">${svg(70, 70, '<defs><radialGradient id="o" cy=".85"><stop stop-color="#35c5f5"/><stop offset=".5" stop-color="#1c63a8"/><stop offset="1" stop-color="#4a6a90"/></radialGradient></defs><circle cx="35" cy="35" r="33" fill="url(#o)" stroke="#9fb6cf" stroke-width="2"/><path d="M6 28C12 0 58 0 64 28C48 36 20 24 6 28Z" fill="#d5e3f0" opacity=".55"/><path d="M20 16c5-3 9-3 14 0l-3 16c-5-3-9-3-14 0z" fill="#e8602c"/><path d="M37 17c5 3 10 3 16 0l-3 16c-6 3-11 3-16 0z" fill="#8cc43f"/><path d="M16 36c5-3 9-3 14 0l-3 15c-5-3-9-3-14 0z" fill="#3f9ce0"/><path d="M33 37c5 3 10 3 16 0l-3 15c-6 3-11 3-16 0z" fill="#fbc22f"/>')}</button>
    <button aria-label="Internet Explorer" style="width:126px;padding-left:6px">${svg(62, 62, '<path d="M50 37H26c0 12 14 13 18 6h12C50 60 16 62 14 36C13 10 50 6 54 30c1 3 0 6-4 7z" fill="#2f8fe0"/><path d="M26 29h16c0-10-15-11-16 0z" fill="#22406e"/><path d="M22 14C36 2 56 0 60 7c2 4-1 8-3 10 3-9-10-8-22 0C22 26 10 42 9 51c0 5 6 5 12 1-8 8-17 9-18 2C1 44 10 24 22 14z" fill="#f4c328"/>')}</button>
    <button class="box" aria-label="Explorer">${svg(60, 58, '<path d="M3 12l3-8h14l4 5h32v44H3z" fill="#f1d878"/><rect x="8" y="2" width="10" height="5" fill="#3a9a3a"/><rect x="22" y="6" width="30" height="9" fill="#fff"/><rect x="24" y="6" width="9" height="4" fill="#d24a3a"/><rect x="38" y="10" width="10" height="4" fill="#3f8fd8"/><path d="M1 17h22l5-4h30l-2 38-53 3z" fill="#f9e797"/><path d="M10 57V40q0-7 7-7h26q7 0 7 7v17h-9V45q0-3-3-3H23q-3 0-3 3v12z" fill="#8ccbe8" stroke="#5ba3c8"/>')}</button>
    <button aria-label="Media Player" style="width:120px">${svg(48, 48, '<path d="M8 1h38v42l-8 3H8z" fill="#a9d8f0"/><path d="M38 2v42M42 2v41" stroke="#4f9ac4" stroke-width="2"/><rect x="1" y="3" width="35" height="42" fill="#7cc0e6"/><circle cx="19" cy="24" r="17" fill="#ef6d20"/><path d="M13 13l18 11-18 11z" fill="#fff"/>')}</button>
    <button class="box lit" aria-label="TapeStation">${svg(60, 62, '<rect width="60" height="62" fill="#fff"/><path d="M0 8h60M0 16h60M0 24h60M0 32h60M8 0v42M16 0v42M24 0v42M32 0v42M40 0v42M48 0v42M56 0v42" stroke="#d6cdd0"/><path d="M2 39h6l4-4 4 4c5-4 5-34 7-36 2 2 4 34 9 36 6 0 7-24 10-25 2 1 4 24 7 22 3-5 4 2 9 3" fill="none" stroke="#2276c9" stroke-width="3"/><path d="M0 43h60" stroke="#666" stroke-width="2"/><path d="M23 44v18M42 44v18" stroke="#222" stroke-width="4"/><path d="M8 44v18M34 44v18M52 44v18" stroke="#aaa" stroke-width="2"/>')}</button>
    <button class="box" aria-label="Paint" style="margin-left:6px">${svg(62, 60, '<path d="M4 46C0 26 18 8 36 12c18 4 22 26 8 38-10 8-20 8-24 4-4-5 4-9-2-13-5-3-9 8-14 5z" fill="#cfe7f4" stroke="#8fb6cc"/><circle cx="12" cy="34" r="5" fill="#dc3a3a"/><circle cx="21" cy="24" r="6" fill="#5cb848"/><circle cx="34" cy="19" r="6" fill="#f0b428"/><circle cx="27" cy="38" r="5" fill="#2a5a98"/><path d="M31 58L44 22L50 25L36 58Z" fill="#e8873a"/><path d="M44 22C42 12 52 4 60 4c2 8-3 19-10 21z" fill="#c99a5c"/>')}</button>
    <div class="tray">
      ${svg(14, 12, '<path d="M7 0l7 11H0z" fill="#fff"/>')}
      ${svg(30, 30, '<path d="M4 1v28" stroke="#fff" stroke-width="2"/><path d="M5 2h13v4h9v12H14v-4H5z" fill="#fff"/><circle cx="20" cy="21" r="8" fill="#d2222f"/><path d="M16 17l8 8M24 17l-8 8" stroke="#fff" stroke-width="2"/>')}
      ${svg(30, 30, '<path d="M14 5H5v22h13v-4" fill="none" stroke="#fff" stroke-width="3"/><rect x="9" y="1" width="6" height="4" fill="#fff"/><path d="M13 10h14v5q0 5-5 5v8h-3v-8q-6 0-6-5z" fill="#fff"/><path d="M17 3v8M23 3v8" stroke="#fff" stroke-width="3"/>')}
      ${svg(30, 30, '<path d="M3 25v-4M9 26V17M15 26V13M21 26V9M27 26V4" stroke="#8d93a5" stroke-width="3"/><path d="M13 13l13 13M26 13L13 26" stroke="#d2222f" stroke-width="4"/>')}
      ${svg(30, 30, '<path d="M2 10h5l8-8v26l-8-8H2z" fill="#fff"/><circle cx="20" cy="20" r="7" fill="none" stroke="#d2222f" stroke-width="4"/><path d="M15 15l10 10" stroke="#d2222f" stroke-width="4"/>')}
    </div>
    <time>${this.run.time}<br>4/18/2017</time><button class="desk" aria-label="Show desktop"></button>`; }
});
</script>
</body>
</html>
